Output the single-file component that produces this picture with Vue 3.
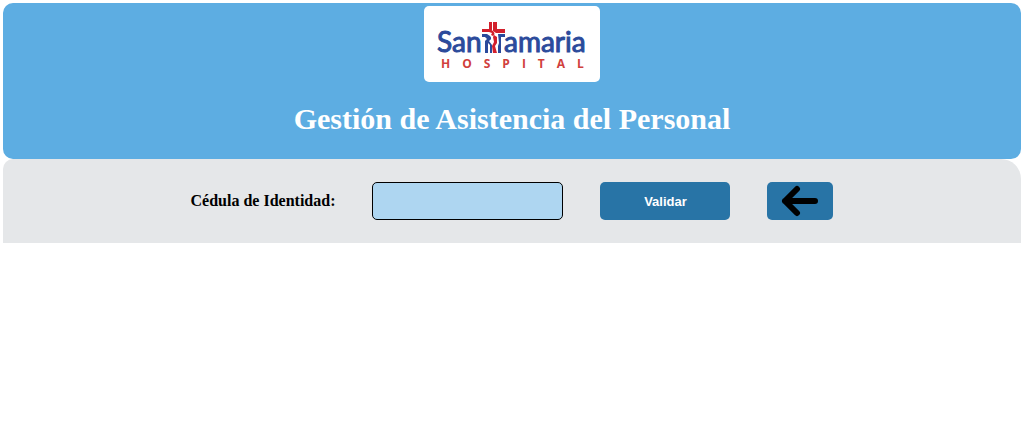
<script setup>
import { ref } from 'vue'

const cedula = ref('')
</script>

<template>
  <div class="page">
    <header class="header">
      <svg class="logo" viewBox="0 0 176 76" role="img" aria-label="Santamaria Hospital">
        <text class="brand" x="13" y="46">San</text>
        <text class="brand" x="80" y="46">amaria</text>
        <g fill="#d3202c">
          <path d="M65 16h3v8h-3zM69 16h4v7h8v4h-9l-3-2z" />
          <path d="M58 23h8l3 2c2 2 2 4 0 5l-2-1 1-2-3-1h-7z" />
          <path d="M70 29l3 2v6l-2 3 2 7h-4l-1-7 2-4-1-5z" />
        </g>
        <g fill="#2b4a9b">
          <path d="M74 28h7v3h-4v16h-3v-7l1-3z" />
          <path d="M58 28h5l3 2c2 2 1 4-1 5l3 4v8h-2v-8l-2-2v10h-3V35l2-2-2-2h-3z" />
        </g>
        <text class="sub" x="17" y="62">HOSPITAL</text>
      </svg>
      <h1>Gestión de Asistencia del Personal</h1>
    </header>
    <form class="bar" @submit.prevent>
      <label for="cedula">Cédula de Identidad:</label>
      <input id="cedula" v-model="cedula" type="text" />
      <button class="validate" type="submit">Validar</button>
      <button class="back" type="button" aria-label="Volver">
        <svg viewBox="0 0 40 32" width="40" height="32" aria-hidden="true">
          <path d="M17 4L5 16l12 12M5 16h30" />
        </svg>
      </button>
    </form>
  </div>
</template>

<style>
body {
  margin: 0;
  background: #fff;
}
</style>

<style scoped>
.page {
  padding: 3px 2px 0 3px;
  font-family: "Liberation Serif", serif;
}

.header {
  display: flex;
  flex-direction: column;
  align-items: center;
  gap: 18px;
  padding: 3px 0 21px;
  border-radius: 10px;
  background: #5dade2;
}

.logo {
  width: 176px;
  height: 76px;
  border-radius: 5px;
  background: #fff;
}

.brand {
  font: 400 28px "Lato", sans-serif;
  fill: #2b4a9b;
  stroke: #2b4a9b;
  stroke-width: 1px;
}

.sub {
  font: bold 12px "Open Sans", sans-serif;
  letter-spacing: 12px;
  fill: #d0403c;
}

h1 {
  margin: 0;
  font-size: 30px;
  line-height: 38px;
  text-align: center;
  color: #fff;
}

.bar {
  display: flex;
  justify-content: center;
  align-items: center;
  gap: 37px;
  padding: 23px 0;
  border-radius: 10px 20px 0 0;
  background: #e5e7e9;
}

label {
  font-size: 16px;
  font-weight: bold;
  color: #000;
}

input,
button {
  box-sizing: border-box;
  height: 38px;
  border-radius: 5px;
}

input {
  width: 191px;
  padding: 0 8px;
  border: 1px solid #000;
  background: #aed6f1;
  font: 13px "Liberation Sans", sans-serif;
}

button {
  display: flex;
  align-items: center;
  justify-content: center;
  padding: 0;
  border: 0;
  background: #2874a6;
  color: #fff;
  font: bold 13px "Liberation Sans", sans-serif;
  cursor: pointer;
}

.validate {
  width: 130px;
}

.back {
  width: 66px;
}

.back path {
  fill: none;
  stroke: #000;
  stroke-width: 6;
  stroke-linecap: round;
  stroke-linejoin: round;
}
</style>
